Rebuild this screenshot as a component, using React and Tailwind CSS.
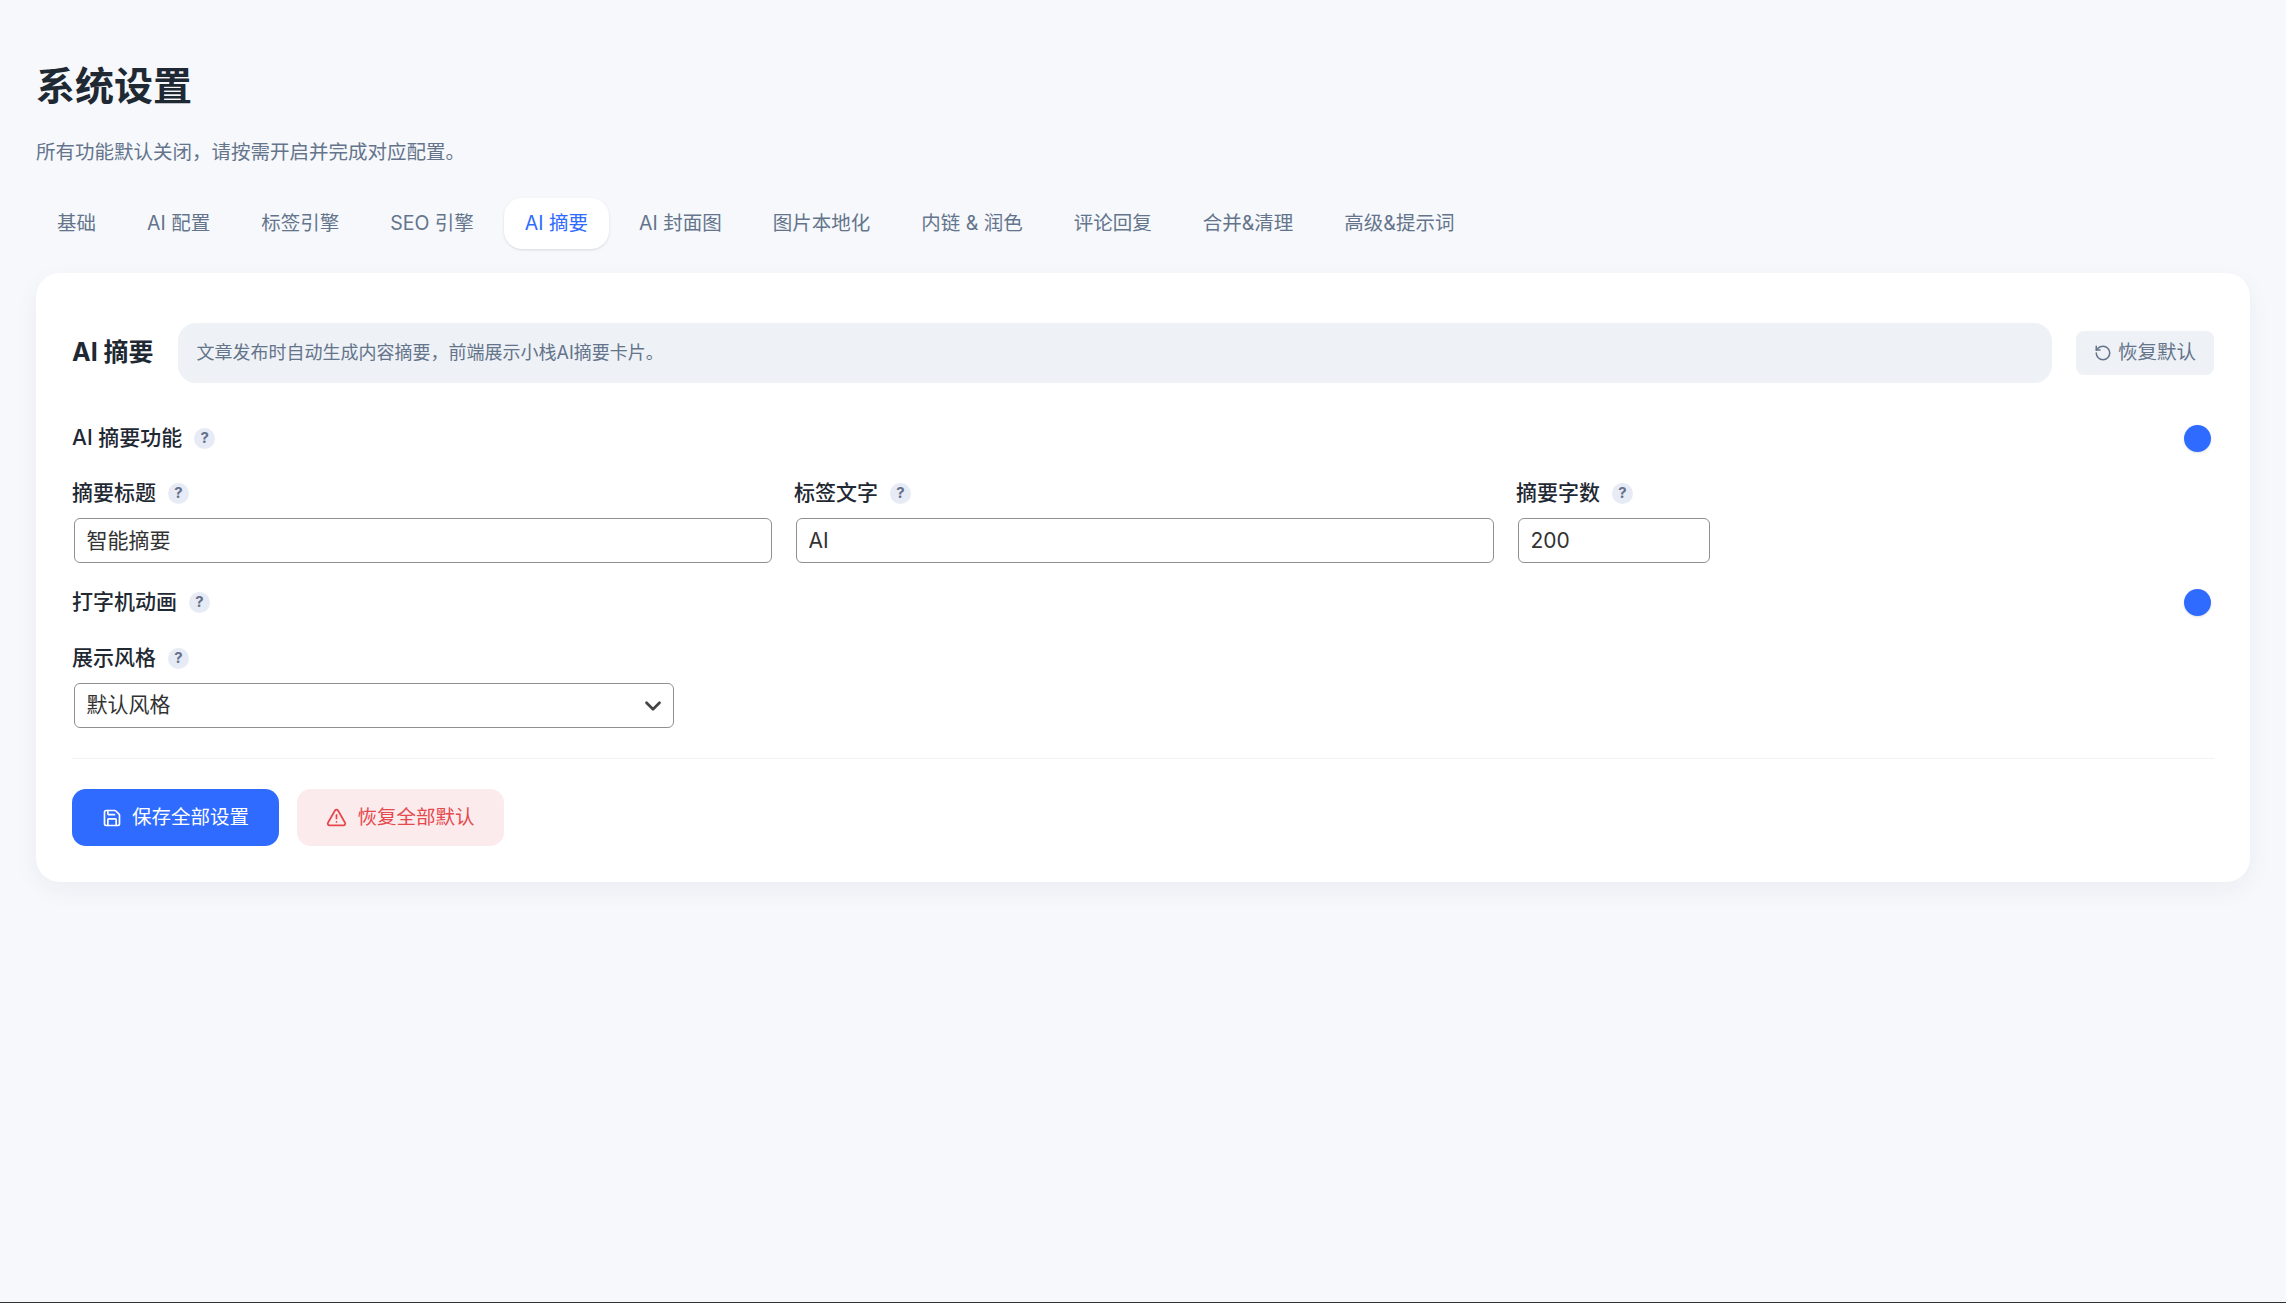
import React from "react";
import { ChevronDown, RotateCcw, Save, TriangleAlert } from "lucide-react";

const tabs = ["基础", "AI 配置", "标签引擎", "SEO 引擎", "AI 摘要", "AI 封面图", "图片本地化", "内链 & 润色", "评论回复", "合并&清理", "高级&提示词"];

function Help() {
  return (
    <span className="flex w-[21px] h-[21px] items-center justify-center rounded-full bg-[#e6ebf5] text-[15px] font-bold text-[#64708b]">?</span>
  );
}

function FieldLabel({ children }) {
  return (
    <div className="flex items-center gap-3 h-[30px] text-[21px] font-medium text-[#1f2933]">
      <span>{children}</span>
      <Help />
    </div>
  );
}

function SwitchRow({ label }) {
  return (
    <div className="flex items-center justify-between h-[30px]">
      <FieldLabel>{label}</FieldLabel>
      <span className="mr-[3px] w-[27px] h-[27px] rounded-full bg-[#2f6bff] shadow-sm"></span>
    </div>
  );
}

function TextField({ label, value, className }) {
  return (
    <div className="flex flex-col">
      <FieldLabel>{label}</FieldLabel>
      <input
        type="text"
        defaultValue={value}
        className={`mt-[10px] ml-[2px] h-[45px] border-[1.5px] border-[#8f8f8f] rounded-[6px] bg-white px-[11.5px] text-[21px] leading-[26px] text-[#333] ${className}`}
      />
    </div>
  );
}

export default function App() {
  return (
    <div className="h-screen overflow-hidden bg-[#f6f8fc] border-b border-[#333] px-[36px] pt-[60px] font-['Inter','Noto_Sans_CJK_SC',sans-serif]">
      <h1 className="text-[39px] leading-[52px] font-bold text-[#1f2933]">系统设置</h1>
      <p className="mt-[26px] text-[19.5px] leading-[28px] text-[#64748b]">所有功能默认关闭，请按需开启并完成对应配置。</p>

      <div className="mt-[32px] flex gap-[9px]">
        {tabs.map((t) => (
          <button
            key={t}
            className={
              t === "AI 摘要"
                ? "h-[51px] px-[21px] rounded-[18px] bg-white text-[19.5px] text-[#2f6bff] shadow-sm"
                : "h-[51px] px-[21px] rounded-[18px] text-[19.5px] text-[#64748b]"
            }
          >
            {t}
          </button>
        ))}
      </div>

      <div className="mt-[24px] rounded-[24px] bg-white px-[36px] pt-[50px] pb-[36px] shadow-[0_8px_24px_rgba(30,41,59,0.05)]">
        <div className="flex items-center">
          <h2 className="text-[25px] font-bold text-[#1f2933]">AI 摘要</h2>
          <div className="ml-[24px] flex-1 h-[60px] flex items-center rounded-[18px] bg-[#eef1f6] px-[19px] pb-[2px] text-[18px] text-[#64748b]">
            文章发布时自动生成内容摘要，前端展示小栈AI摘要卡片。
          </div>
          <button className="ml-[24px] h-[44px] w-[138px] flex items-center justify-center gap-[6px] rounded-[8px] bg-[#eef1f6] text-[19.5px] text-[#64748b]">
            <RotateCcw className="w-[18px] h-[18px]" />
            恢复默认
          </button>
        </div>

        <div className="mt-[40px]">
          <SwitchRow label="AI 摘要功能" />
        </div>

        <div className="mt-[25px] grid grid-cols-3 gap-[24px]">
          <TextField label="摘要标题" value="智能摘要" className="w-[698px] pb-[4px]" />
          <TextField label="标签文字" value="AI" className="w-[698px]" />
          <TextField label="摘要字数" value="200" className="w-[192px]" />
        </div>

        <div className="mt-[24px]">
          <SwitchRow label="打字机动画" />
        </div>

        <div className="mt-[26px]">
          <FieldLabel>展示风格</FieldLabel>
          <div className="relative mt-[10px] ml-[2px] w-[600px]">
            <select
              defaultValue="default"
              className="block w-full h-[45px] appearance-none border-[1.5px] border-[#8f8f8f] rounded-[6px] bg-white px-[11.5px] pb-[2px] text-[21px] text-[#333]"
            >
              <option value="default">默认风格</option>
            </select>
            <ChevronDown className="absolute right-[8px] top-[10px] w-[26px] h-[26px] text-[#444] pointer-events-none" strokeWidth={2.5} />
          </div>
        </div>

        <div className="mt-[30px] h-px bg-[#f1f3f6]"></div>

        <div className="mt-[30px] flex gap-[18px]">
          <button className="w-[207px] h-[57px] flex items-center justify-center gap-[10px] rounded-[14px] bg-[#2f6bff] text-[19.5px] text-white">
            <Save className="w-[20px] h-[20px]" />
            保存全部设置
          </button>
          <button className="w-[207px] h-[57px] flex items-center justify-center gap-[10px] rounded-[14px] bg-[#fcebec] text-[19.5px] text-[#e5484d]">
            <TriangleAlert className="w-[21px] h-[21px]" />
            恢复全部默认
          </button>
        </div>
      </div>
    </div>
  );
}
